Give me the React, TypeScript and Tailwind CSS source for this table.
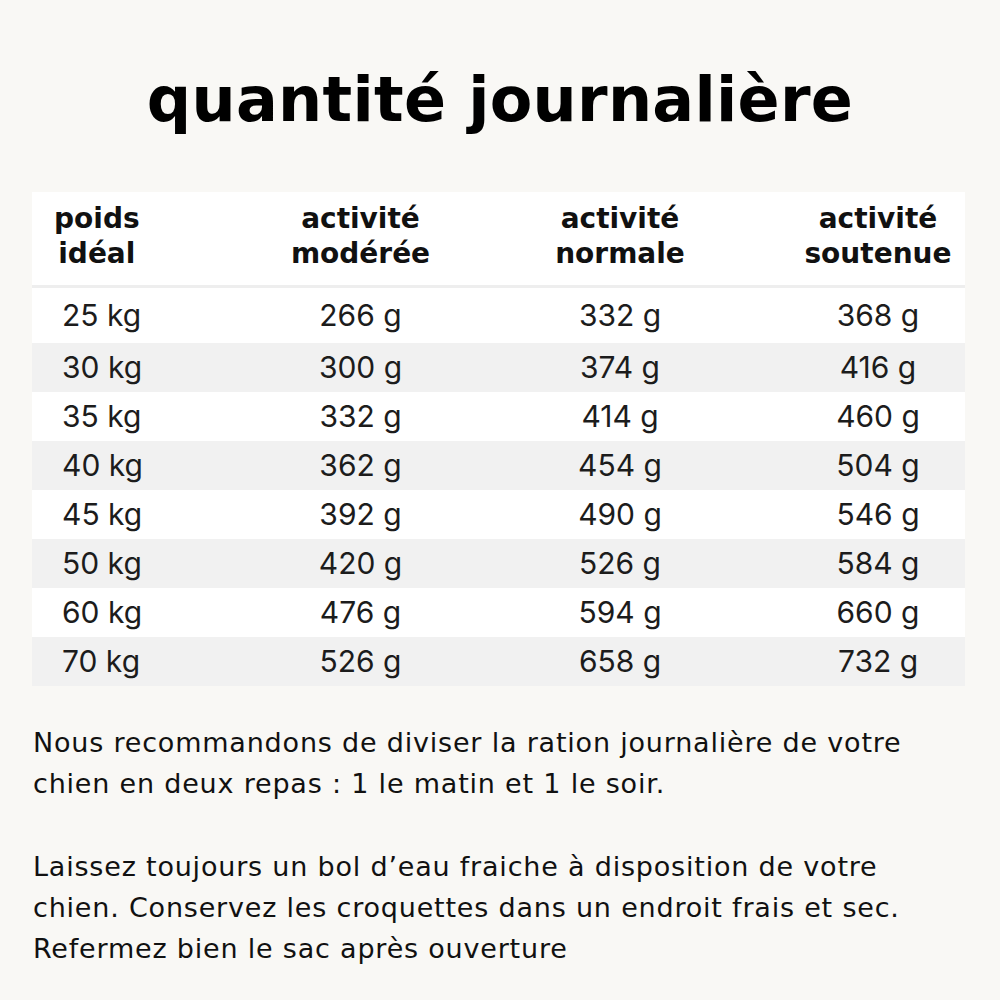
import React from 'react';

const rows = [
  ['25 kg', '266 g', '332 g', '368 g'],
  ['30 kg', '300 g', '374 g', '416 g'],
  ['35 kg', '332 g', '414 g', '460 g'],
  ['40 kg', '362 g', '454 g', '504 g'],
  ['45 kg', '392 g', '490 g', '546 g'],
  ['50 kg', '420 g', '526 g', '584 g'],
  ['60 kg', '476 g', '594 g', '660 g'],
  ['70 kg', '526 g', '658 g', '732 g'],
];

const App = () => {
  return (
    <div className="min-h-screen w-[1000px] bg-[#f9f8f5] text-[#111]">
      <h1 className="pt-[62px] text-center text-[62px] leading-[76px] font-bold tracking-[0.3px] text-black font-['DejaVu_Sans',sans-serif]">
        quantité journalière
      </h1>

      {/* table */}
      <div className="mx-[32px] mt-[54px] w-[933px] bg-white">
        <div className="grid grid-cols-[198px_261px_258px_216px] h-[96px] border-b-[3px] border-[#eeeeee] pt-[9px] text-[28px] leading-[35px] font-bold text-[#111] tracking-[0px] font-['DejaVu_Sans',sans-serif]">
          <div className="pl-[22px]">
            <span className="inline-block text-center">poids<br />idéal</span>
          </div>
          <div className="text-center">activité<br />modérée</div>
          <div className="text-center">activité<br />normale</div>
          <div className="pl-[42px] text-center">activité<br />soutenue</div>
        </div>
        {rows.map((r, i) => (
          <div
            key={r[0]}
            className={`grid grid-cols-[198px_261px_258px_216px] items-center text-[30px] text-[#1c1c1c] font-['Inter',sans-serif] ${
              i === 0 ? 'h-[55px]' : 'h-[49px]'
            } ${i % 2 === 1 ? 'bg-[#f1f1f1]' : 'bg-white'}`}
          >
            <div className="pl-[30px]">{r[0]}</div>
            <div className="text-center">{r[1]}</div>
            <div className="text-center">{r[2]}</div>
            <div className="pl-[42px] text-center">{r[3]}</div>
          </div>
        ))}
      </div>

      <div className="mt-[36px] px-[33px] text-[27px] leading-[41px] tracking-[0.8px] text-[#111] font-['DejaVu_Sans',sans-serif]">
        <p>
          Nous recommandons de diviser la ration journalière de votre
          <br />
          chien en deux repas : 1 le matin et 1 le soir.
        </p>
        <p className="mt-[42px]">
          Laissez toujours un bol d’eau fraiche à disposition de votre
          <br />
          chien. Conservez les croquettes dans un endroit frais et sec.
          <br />
          Refermez bien le sac après ouverture
        </p>
      </div>
    </div>
  );
};

export default App;
